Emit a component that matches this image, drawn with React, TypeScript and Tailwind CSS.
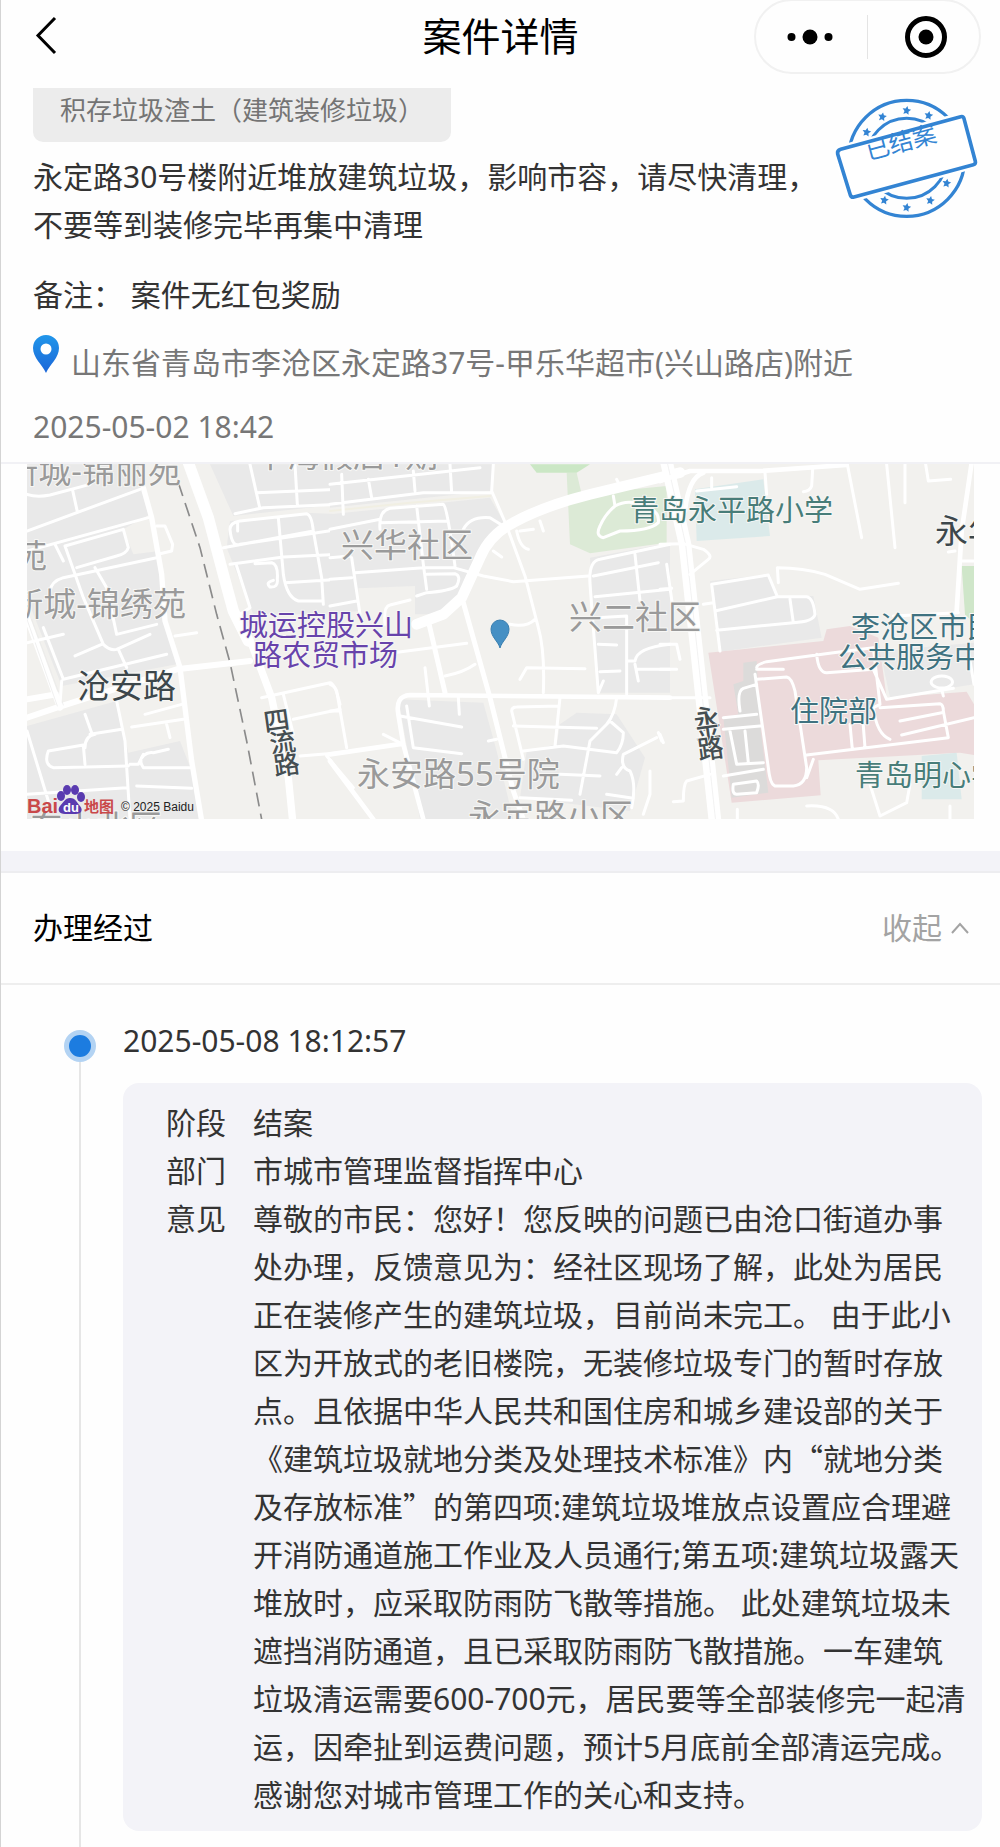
import React, { useState } from 'react';

const MAP_LABEL_COLORS = {
  area: '#9a9a9a',
  road: '#3d474b',
  market: '#6743ab',
  school: '#487d79',
  service: '#3f7280',
};

type MapLabel = {
  text: string;
  x: number;
  y: number;
  size: number;
  kind: keyof typeof MAP_LABEL_COLORS;
  anchor?: 'start' | 'end';
};

const mapLabels: MapLabel[] = [
  { text: '新城-锦丽苑', x: 154, y: 19, size: 33, kind: 'area', anchor: 'end' },
  { text: '雅苑', x: 20, y: 104, size: 33, kind: 'area', anchor: 'end' },
  { text: '新城-锦绣苑', x: 159, y: 152, size: 33, kind: 'area', anchor: 'end' },
  { text: '沧安路', x: 50, y: 234, size: 33, kind: 'road' },
  { text: '华海假店1期', x: 411, y: 3, size: 33, kind: 'area', anchor: 'end' },
  { text: '兴华社区', x: 314, y: 93, size: 33, kind: 'area' },
  { text: '兴二社区', x: 542, y: 165, size: 33, kind: 'area' },
  { text: '永安路55号院', x: 330, y: 322, size: 33, kind: 'area' },
  { text: '永定路小区', x: 441, y: 364, size: 33, kind: 'area' },
  { text: '东小北区', x: 3, y: 375, size: 33, kind: 'area' },
  { text: '城运控股兴山', x: 212, y: 172, size: 29, kind: 'market' },
  { text: '路农贸市场', x: 226, y: 202, size: 29, kind: 'market' },
  { text: '青岛永平路小学', x: 603, y: 57, size: 29, kind: 'school' },
  { text: '永年', x: 908, y: 79, size: 33, kind: 'road' },
  { text: '李沧区市民', x: 824, y: 174, size: 29, kind: 'service' },
  { text: '公共服务中心', x: 811, y: 204, size: 29, kind: 'service' },
  { text: '住院部', x: 763, y: 258, size: 29, kind: 'service' },
  { text: '青岛明心学校', x: 828, y: 322, size: 29, kind: 'school' },
];

const roadNames = [
  { text: '四', x: 251, y: 266 },
  { text: '流', x: 257, y: 288 },
  { text: '路', x: 261, y: 310 },
  { text: '永', x: 681, y: 264 },
  { text: '平', x: 683, y: 282 },
  { text: '路', x: 685, y: 294 },
];

const stars = [
  [140, 126], [187, 80], [260, 61], [326, 76],
  [380, 279], [331, 331], [260, 352], [193, 330],
];

const opinion = {
  before:
    '尊敬的市民：您好！您反映的问题已由沧口街道办事处办理，反馈意见为：经社区现场了解，此处为居民正在装修产生的建筑垃圾，目前尚未完工。 由于此小区为开放式的老旧楼院，无装修垃圾专门的暂时存放点。且依据中华人民共和国住房和城乡建设部的关于《建筑垃圾就地分类及处理技术标准》内',
  quoted: '就地分类及存放标准',
  after:
    '的第四项:建筑垃圾堆放点设置应合理避开消防通道施工作业及人员通行;第五项:建筑垃圾露天堆放时，应采取防雨防飞散等措施。 此处建筑垃圾未遮挡消防通道，且已采取防雨防飞散措施。一车建筑垃圾清运需要600-700元，居民要等全部装修完一起清运，因牵扯到运费问题，预计5月底前全部清运完成。感谢您对城市管理工作的关心和支持。',
};

const ClosedStamp: React.FC = () => (
  <svg viewBox="0 0 510 420" className="mt-[2px] h-[140px] w-[170px]" fill="none" stroke="#3384d3">
    <circle cx="260" cy="205" r="174" strokeWidth="10" />
    <circle cx="260" cy="205" r="120" strokeWidth="9" />
    {stars.map(([x, y]) => (
      <path
        key={`${x}-${y}`}
        transform={`translate(${x} ${y}) rotate(10)`}
        d="M0-13 4-5 13-4 6 3 8 12 0 8-8 12-6 3-13-4-4-5Z"
        fill="#3384d3"
        stroke="none"
      />
    ))}
    <path d="M62 178 422 80Q430 78 432 86L466 214Q468 222 460 224L102 321Q94 323 91 315L53 192Q51 181 62 178Z" fill="#fff" stroke="#fff" strokeWidth="26" />
    <path d="M62 178 422 80Q430 78 432 86L466 214Q468 222 460 224L102 321Q94 323 91 315L53 192Q51 181 62 178Z" fill="#fff" strokeWidth="11" strokeLinejoin="round" />
    <text x="145" y="210" transform="rotate(-15 145 210)" fontSize="72" fill="#3384d3" stroke="none">
      已结案
    </text>
  </svg>
);

const CaseMap: React.FC = () => (
  <svg viewBox="0 0 947 355" className="block w-full bg-[#f2f1ee]" role="img" aria-label="案件位置地图">
    {/* west side */}
    <g transform="translate(-27 -13) scale(0.33333)" fill="none" stroke="#fff" strokeWidth="9" strokeLinecap="round" strokeLinejoin="round">
      <g fill="#e9e9e9" stroke="none">
        <path d="M81 40H415L450 190 370 235 400 310 478 300 490 480 530 640 185 705 81 440Z" />
        <path d="M81 825 350 750 385 905 540 870 575 960 600 1105H81Z" />
        <path d="M630 40H1020V160L700 195Z" />
        <path d="M690 210 920 185 1020 190V490H760L680 290Z" />
      </g>
      <path d="M81 800 170 770 530 655 750 630M81 500 180 770M81 745 170 730" strokeWidth="18" />
      <path d="M81 505 172 765M95 505 190 762" stroke="#e9e9e9" strokeWidth="2" />
      <path d="M430 110 455 200 485 370 495 510 540 650 575 930 605 1110" strokeWidth="16" />
      <path d="M565 35 625 200 670 370 700 480 755 580 815 740 865 980 878 1110" strokeWidth="22" />
      <path d="M565 35 625 200 670 370 700 480 745 570" strokeWidth="34" />
      <path d="M81 240 420 115M81 130Q110 140 150 132L270 100M218 118 232 182M81 300 445 200M195 285 370 235 385 290Q380 308 350 315L230 350M165 280 190 330M195 285 250 440 310 580Q330 600 350 595L450 550M470 225 495 225 518 280 515 300 480 308M150 420Q155 390 190 380L470 320M285 350 320 410 350 550 470 520M81 575 190 550M130 530 190 685 500 610M225 615 305 580M355 595 380 650M185 690 180 760M525 555 590 545" />
      <path d="M350 750 375 870 390 1105M255 790 275 845M270 850 365 835M255 890Q255 855 285 850M390 940 415 940Q430 900 460 905L505 895M570 950H430Q415 930 430 910M145 900 250 882 255 940M145 900Q130 940 160 950L385 945M395 828 550 805M500 820 510 860M435 790 545 760M81 1030 380 1010M410 1005 575 1012M81 840 145 1050" />
      <path d="M750 40 778 165M885 40 892 160M705 188 790 170 1020 160M770 125 1020 115M690 235Q690 215 720 210L920 188Q935 192 940 240L965 380 970 460M690 235Q695 290 720 280L1020 235M713 215V240M835 200 850 370Q860 440 895 450L965 450M670 290 940 240M690 340 850 318 1020 310M765 338 815 335Q835 340 832 385 835 410 810 408 795 395 820 388M855 395 1020 385M710 345 750 470 720 490M785 740 990 695Q1005 695 1020 760M850 730 880 850M880 805 1020 775M900 915 1020 905M980 915 1060 1010" />
      <path d="M535 95 600 290 650 490 690 635 740 870 785 1105" stroke="#8b8b8b" strokeWidth="5" strokeDasharray="42 22" strokeLinecap="butt" />
    </g>

    {/* centre */}
    <g transform="translate(303 -13) scale(0.33333)" fill="none" stroke="#fff" strokeWidth="9" strokeLinecap="round" strokeLinejoin="round">
      <g fill="#e9e9e9" stroke="none">
        <path d="M0 40H490L485 120 0 170Z" />
        <path d="M0 190 480 140 525 220 460 300 400 440 320 490H255V405L85 412V480L0 490Z" />
        <path d="M205 745 460 755 500 900 550 1105H270Z" />
        <path d="M740 785 860 790 945 920 900 1080 570 1040 590 900 680 880 690 820Z" />
        <path d="M780 320 1020 275V725H805Z" />
        <path d="M710 65H740L755 130 1010 105V275L780 307 720 280Z" fill="#dcead6" />
        <path d="M600 40H780L740 65H620Z" fill="#cbe7c5" />
      </g>
      <path d="M0 180 240 155 480 135" stroke="#f1efe3" strokeWidth="6" />
      <path d="M260 520 340 490 395 440 450 320Q480 250 550 215 640 165 780 130L1050 65" strokeWidth="32" />
      <path d="M400 455 480 740 550 1020 580 1105M295 510 345 725" strokeWidth="15" />
      <path d="M205 790Q195 735 240 732L1020 740M205 790 220 880 280 1105M0 910 220 878M0 930 130 1105" strokeWidth="14" />
      <path d="M490 40 485 120 530 225 585 375 625 530Q645 600 640 725M250 60 255 120M360 40 365 125M115 85 125 140M35 70 40 190M0 100 450 50M0 160 280 125H485M150 235Q145 180 180 172L340 160Q350 160 375 345M150 215 355 210M260 165 280 340 290 415M0 235 150 205M0 320 60 315M75 365 280 350 370 350 460 375 550 392 775 375M65 320 90 490M0 385 65 380M290 370 375 368Q395 375 380 405 360 420 290 425L260 435M400 235Q420 195 480 200L520 225M0 465 80 450M165 520Q160 465 180 462L240 447M190 605 410 577M345 675Q400 665 435 640M540 520Q590 530 615 505M570 685 590 650 765 653M560 240Q570 290 595 295M570 240 610 235M630 210 640 240M490 300 515 318M285 650 298 765" />
      <path d="M385 740 388 790M230 765 250 890 395 908M210 795 395 828M160 850 215 878M475 870 500 865M545 780Q545 768 560 768L688 765M690 740 675 885M545 780 580 925M550 825 800 832M580 900 700 885 860 905Q880 880 880 845L840 810 780 870 750 1030M860 740Q855 790 830 820M985 845 995 870M980 860 880 910Q870 950 900 960 920 1000 905 1070M860 970 875 950M960 960V1030L940 1090M690 970 810 975M830 1030 910 1042M570 1040 725 1048M0 780H25M0 700Q15 705 20 720L50 890" />
      <path d="M860 85 870 105M850 135 855 165Q900 140 950 170 990 180 985 215 960 240 870 240L820 260Q795 255 810 225 825 190 855 165M780 400Q775 330 810 325L1020 280M780 400 805 725M790 375 985 335M915 310 930 450M795 437 1020 415M800 500 890 495 890 730M805 580 860 582M810 662 870 660M805 725 820 690M890 630 915 630Q920 590 1020 580M915 640 925 690M920 655H1020" />
    </g>

    {/* east side */}
    <g transform="translate(633 -13) scale(0.33333)" fill="none" stroke="#fff" strokeWidth="9" strokeLinecap="round" strokeLinejoin="round">
      <g fill="#e9e9e9" stroke="none">
        <path d="M150 390 330 370 350 435 460 435 485 560 180 602Z" />
        <path d="M105 115 310 85 330 255 110 270Z" fill="#dbeaea" />
        <path d="M145 605 490 570 500 535 570 525 655 560 680 740 920 722 942 760V912L900 905 475 928 482 1033 215 1055Z" fill="#ecdadb" />
        <path d="M250 635 290 630 300 820 325 1025 215 1040 190 800 235 790 220 700 250 690Z" fill="#dcdbda" />
        <path d="M660 600 942 575V700L690 740Z" />
        <path d="M905 345H945V520L915 490Z" fill="#cfe6c9" />
        <path d="M785 915 890 905 905 1045H785Z" fill="#dbeaea" />
      </g>
      <path d="M20 35 75 280 110 600 165 1110" strokeWidth="38" />
      <path d="M22 35 77 280 112 600 167 1110" stroke="#ececec" strokeWidth="2" />
      <path d="M0 90 90 60 300 60 560 42" strokeWidth="14" />
      <path d="M130 65Q85 80 75 180M935 35 905 240 890 480" strokeWidth="14" />
      <path d="M155 80V110M110 120 230 107M315 65 320 130M458 55 455 105Q450 120 430 122M562 40 605 260M680 40 705 290M735 40V155M797 40 805 90 872 85M865 303 885 300M905 330H942M0 280 70 278 130 295Q160 315 145 325L90 370M355 395 352 350Q430 350 495 370L600 415 715 397M130 460 160 455M155 400 180 600M155 400 325 372 352 437 165 480M352 437 440 437Q460 440 465 490 460 512 400 515L170 538M390 445 400 515M20 340 40 480M0 415 35 412M0 655H50M0 580 50 580 60 625M0 740H150" />
      <path d="M290 650Q290 640 320 632L520 605 640 590M290 655 370 655M290 685 380 678Q395 680 405 720L440 950Q440 1000 400 1005H345Q330 1000 325 950L285 670M470 610Q475 665 500 665L640 655M640 590 660 760 640 770Q650 850 690 865M640 655 680 745 880 712M660 770 840 758Q850 760 850 780L865 860 440 912M720 810 845 785M725 852 942 800M570 820 577 895M608 800 615 890M240 780Q230 720 250 712L290 700M190 800 290 790M190 835 300 825M210 840 230 940 310 935M255 840 265 935M460 925 440 980M190 975 310 955M220 1000Q215 1030 230 1030L290 1025Q300 1000 290 990Z" />
      <path d="M845 675A32 18 0 1 0 846 675ZM845 715 850 735M150 970 80 990Q70 1000 70 1050L40 1052M440 1065Q520 1060 535 1105M630 1000 660 1095 740 1055 750 1000M870 1065V1105M232 1075V1105M700 495 895 485M0 850 10 875M925 600 942 700" />
    </g>

    <g stroke="#f7f7f5" strokeWidth="2" paintOrder="stroke" strokeLinejoin="round">
      {mapLabels.map((label) => (
        <text
          key={`${label.text}-${label.x}`}
          x={label.x}
          y={label.y}
          fontSize={label.size}
          textAnchor={label.anchor ?? 'start'}
          fill={MAP_LABEL_COLORS[label.kind]}
        >
          {label.text}
        </text>
      ))}
      {roadNames.map((name) => (
        <text
          key={`${name.text}-${name.x}`}
          x={name.x}
          y={name.y}
          fontSize="26"
          fontWeight="500"
          textAnchor="middle"
          fill="#454e52"
          transform={`rotate(-8 ${name.x} ${name.y})`}
        >
          {name.text}
        </text>
      ))}
    </g>

    <path d="M473 184C471 177 464 173 464 165A9 9 0 0 1 482 165C482 173 475 177 473 184Z" fill="#4690c4" stroke="#3a7fb0" />

    {/* provider mark */}
    <g fontFamily="Liberation Sans, sans-serif" fontWeight="700">
      <text x="0" y="349" fontSize="20" fill="#c9484a">Bai</text>
      <g fill="#5a3bb0">
        <ellipse cx="34" cy="332" rx="4" ry="5" />
        <ellipse cx="40" cy="326" rx="4" ry="5" />
        <ellipse cx="48" cy="326" rx="4" ry="5" />
        <ellipse cx="54" cy="333" rx="4" ry="5" />
        <path d="M43 334C49 334 50 339 53 342 57 347 53 350 49 350H38C32 350 30 346 33 342 36 339 38 334 43 334Z" />
      </g>
      <text x="36" y="348" fontSize="13" fill="#fff">du</text>
      <text x="57" y="348" fontSize="15" fill="#c9484a" fontFamily="Noto Sans CJK SC, sans-serif">地图</text>
      <text x="94" y="347" fontSize="12" fontWeight="400" fill="#222">© 2025 Baidu</text>
    </g>
  </svg>
);

const App: React.FC = () => {
  const [open, setOpen] = useState(true);

  return (
    <div className="flex min-h-screen flex-col border-l border-[#d4d4d4] bg-[#fefefe] font-['Noto_Sans','Noto_Sans_CJK_SC',sans-serif] text-[30px] leading-[48px] text-[#333]">
      <header className="grid h-[88px] grid-cols-3 items-start text-black">
        <button type="button" aria-label="返回" className="ml-[32px] mt-[16px] size-[40px]">
          <svg viewBox="0 0 40 40" fill="none" stroke="currentColor" strokeWidth="3">
            <path d="M22 2 5 19.5 22 37" />
          </svg>
        </button>
        <h1 className="mt-[12px] text-center text-[39px]">案件详情</h1>
        <div className="-mt-px mr-[19px] flex h-[75px] w-[227px] items-center justify-self-end rounded-full border-2 border-[#f1f1f1]">
          <button type="button" aria-label="更多" className="flex flex-1 justify-center pr-[4px]">
            <svg viewBox="0 0 46 16" className="h-[16px] w-[46px]">
              <circle cx="4.5" cy="8" r="4" />
              <circle cx="23" cy="8" r="7.5" />
              <circle cx="41.5" cy="8" r="4" />
            </svg>
          </button>
          <span className="h-[44px] w-px bg-[#e4e4e4]" />
          <button type="button" aria-label="关闭" className="flex flex-1 justify-center pl-[4px]">
            <svg viewBox="0 0 42 42" className="size-[42px]">
              <circle cx="21" cy="21" r="18.5" fill="none" stroke="#000" strokeWidth="5" />
              <circle cx="21" cy="21" r="7.5" />
            </svg>
          </button>
        </div>
      </header>

      <section className="border-b-2 border-[#f1f1f5] pb-[11px] pl-[32px] pr-[10px]">
        <div className="flex items-start justify-between">
          <div className="flex-1">
            <p className="mb-[11px] h-[54px] w-fit rounded-b-[10px] bg-[#ececec] px-[27px] text-[26px] leading-[44px] text-[#747474]">
              积存垃圾渣土（建筑装修垃圾）
            </p>
            <p>永定路30号楼附近堆放建筑垃圾，影响市容，请尽快清理，不要等到装修完毕再集中清理</p>
          </div>
          <ClosedStamp />
        </div>
        <p className="mt-[22px]">备注： 案件无红包奖励</p>
        <div className="mt-[16px] flex items-start gap-[12px] text-[#777]">
          <svg viewBox="0 0 26 38" className="h-[38px] w-[26px]">
            <defs>
              <linearGradient id="pin" x1="0" y1="0" x2="0" y2="1">
                <stop offset="0" stopColor="#2196ea" />
                <stop offset="1" stopColor="#1b66d8" />
              </linearGradient>
            </defs>
            <path d="M13 38C9 29 0 23 0 13A13 13 0 0 1 26 13C26 23 17 29 13 38Z" fill="url(#pin)" />
            <circle cx="13" cy="14" r="5.5" fill="#fff" />
          </svg>
          <p className="mt-[4px]">山东省青岛市李沧区永定路37号-甲乐华超市(兴山路店)附近</p>
        </div>
        <p className="mt-[16px] text-[#777]">2025-05-02 18:42</p>
      </section>

      <section className="px-[26px] pb-[32px]">
        <CaseMap />
      </section>

      <div className="h-[22px] border-b-2 border-[#ededf0] bg-[#f3f3f8]" />

      <section className="flex flex-1 flex-col">
        <div className="flex h-[112px] items-center justify-between border-b-2 border-[#eee] pl-[32px] pr-[31px]">
          <h2 className="text-black">办理经过</h2>
          <button
            type="button"
            aria-expanded={open}
            onClick={() => setOpen(!open)}
            className="flex items-center gap-[9px] text-[#a3a3a3]"
          >
            收起
            <svg viewBox="0 0 18 12" className="h-[12px] w-[18px]" fill="none" stroke="currentColor" strokeWidth="2">
              <path d="M1 11 9 2 17 11" />
            </svg>
          </button>
        </div>

        {open && (
          <ol className="flex flex-1 flex-col">
            <li className="flex flex-1 pr-[18px]">
              <div className="ml-[63px] mr-[27px] flex w-[32px] flex-col items-center pt-[45px]">
                <span className="size-[32px] shrink-0 rounded-full border-5 border-[#b3d3f3] bg-[#1c7ce0]" />
                <span className="w-[2px] flex-1 bg-[#e6e6e6]" />
              </div>
              <div className="flex-1 pb-[15px] pt-[32px]">
                <time className="block">2025-05-08 18:12:57</time>
                <dl className="mt-[18px] grid grid-cols-[60px_1fr] gap-x-[27px] rounded-[16px] bg-[#f3f3f8] pb-[12px] pl-[43px] pr-[12px] pt-[16px]">
                  <dt>阶段</dt>
                  <dd>结案</dd>
                  <dt>部门</dt>
                  <dd>市城市管理监督指挥中心</dd>
                  <dt>意见</dt>
                  <dd>
                    {opinion.before}
                    <span className="font-['Noto_Sans_CJK_SC',sans-serif] leading-none">“{opinion.quoted}”</span>
                    {opinion.after}
                  </dd>
                </dl>
              </div>
            </li>
          </ol>
        )}
      </section>
    </div>
  );
};

export default App;
